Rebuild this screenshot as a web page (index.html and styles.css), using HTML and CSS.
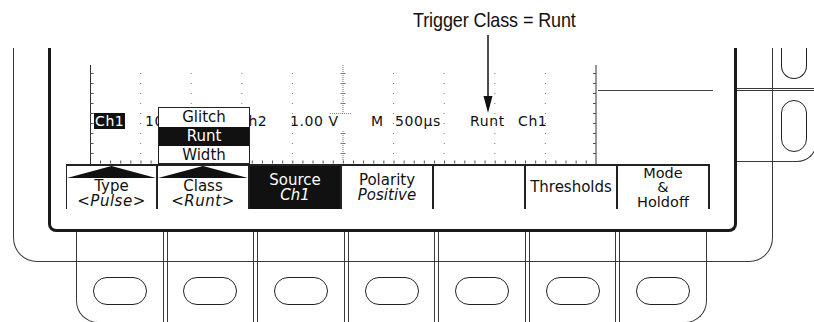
FILE: index.html
```html
<!DOCTYPE html>
<html lang="en">
<head>
    <meta charset="UTF-8">
    <title>Trigger Class = Runt</title>
    <link rel="stylesheet" href="styles.css">
</head>
<body>
<div class="page">
    <div class="caption">Trigger Class = Runt</div>
    <svg class="arrow" width="12" height="80" viewBox="0 0 12 80">
        <line x1="6" y1="1" x2="6" y2="66" stroke="#111" stroke-width="1.5"/>
        <polygon points="1.5,62 10.5,62 6,79" fill="#111"/>
    </svg>

    <div class="bezel">
        <div class="screen">
            <div class="upper">
                <div class="graticule">
                    <svg class="grid" width="507" height="101" viewBox="0 0 507 101">
                        <!-- frame edges -->
                        <line x1="0.5" y1="2" x2="0.5" y2="101" stroke="#333"/>
                        <line x1="506" y1="2" x2="506" y2="101" stroke="#333"/>
                        <line x1="2" y1="10" x2="2" y2="100" stroke="#555" stroke-width="3" stroke-dasharray="1 9"/>
                        <line x1="504.5" y1="10" x2="504.5" y2="100" stroke="#555" stroke-width="3" stroke-dasharray="1 9"/>
                        <line x1="10" y1="99" x2="506" y2="99" stroke="#555" stroke-width="3" stroke-dasharray="1 9.12"/>
                        <!-- major division dots -->
                        <g stroke="#777" stroke-dasharray="1 9">
                            <line x1="50.6" y1="10" x2="50.6" y2="100"/>
                            <line x1="101.2" y1="10" x2="101.2" y2="100"/>
                            <line x1="151.8" y1="10" x2="151.8" y2="100"/>
                            <line x1="202.4" y1="10" x2="202.4" y2="100"/>
                            <line x1="303.6" y1="10" x2="303.6" y2="100"/>
                            <line x1="354.2" y1="10" x2="354.2" y2="100"/>
                            <line x1="404.8" y1="10" x2="404.8" y2="100"/>
                            <line x1="455.4" y1="10" x2="455.4" y2="100"/>
                        </g>
                        <!-- center lines -->
                        <line x1="3" y1="50.5" x2="12" y2="50.5" stroke="#888" stroke-dasharray="1 1"/>
                        <line x1="240" y1="50.5" x2="262" y2="50.5" stroke="#888" stroke-dasharray="1 1"/>
                        <line x1="253" y1="2" x2="253" y2="50" stroke="#777" stroke-dasharray="1 1"/>
                        <line x1="253" y1="68" x2="253" y2="98" stroke="#777" stroke-dasharray="1 1"/>
                        <line x1="253" y1="10" x2="253" y2="50" stroke="#777" stroke-width="5" stroke-dasharray="1 9"/>
                        <line x1="253" y1="70" x2="253" y2="100" stroke="#777" stroke-width="5" stroke-dasharray="1 9"/>
                    </svg>
                    <div class="readouts">
                        <span class="tag">Ch1</span>
                        <span>100mV</span>
                        <span>Ch2</span>
                        <span>1.00 V</span>
                        <span>M</span>
                        <span>500µs</span>
                        <span>Runt</span>
                        <span>Ch1</span>
                    </div>
                </div>
                <div class="side"></div>
            </div>

            <div class="menu">
                <div class="item pointer">
                    <svg class="tri" viewBox="0 0 90 13" preserveAspectRatio="none"><polygon points="0,13 45,0 90,13" fill="#111"/></svg>
                    <span>Type</span>
                    <span class="sub">&lt;<i>Pulse</i>&gt;</span>
                </div>
                <div class="item pointer">
                    <svg class="tri" viewBox="0 0 90 13" preserveAspectRatio="none"><polygon points="0,13 45,0 90,13" fill="#111"/></svg>
                    <span>Class</span>
                    <span class="sub">&lt;<i>Runt</i>&gt;</span>
                </div>
                <div class="item active">
                    <span>Source</span>
                    <i>Ch1</i>
                </div>
                <div class="item">
                    <span>Polarity</span>
                    <i>Positive</i>
                </div>
                <div class="item"></div>
                <div class="item">
                    <span>Thresholds</span>
                </div>
                <div class="item tight">
                    <span>Mode</span>
                    <span>&amp;</span>
                    <span>Holdoff</span>
                </div>

                <div class="popup">
                    <div class="opt">Glitch</div>
                    <div class="opt selected">Runt</div>
                    <div class="opt">Width</div>
                </div>
            </div>
        </div>

        <div class="keys">
            <div class="key"><span class="oval"></span></div>
            <div class="key"><span class="oval"></span></div>
            <div class="key"><span class="oval"></span></div>
            <div class="key"><span class="oval"></span></div>
            <div class="key"><span class="oval"></span></div>
            <div class="key"><span class="oval"></span></div>
            <div class="key"><span class="oval"></span></div>
        </div>
    </div>

    <div class="knobs">
        <div class="knob-row"><span class="knob-cut"></span></div>
        <div class="knob-row second"><span class="knob"></span></div>
    </div>
</div>
</body>
</html>
```

FILE: styles.css
```css
html, body { margin: 0; padding: 0; overflow: hidden; background: #fff; }
body { font-family: "DejaVu Sans", sans-serif; color: #111; }

.page { position: relative; width: 814px; height: 322px; padding: 48px 0 0 13px; box-sizing: border-box; }

/* callout */
.caption { position: absolute; left: 413px; top: 9px; font-family: "Liberation Sans", Arial, sans-serif; font-size: 21px; line-height: 21px; letter-spacing: -0.1px; white-space: nowrap; transform: scaleX(0.855); transform-origin: left top; }
.arrow { position: absolute; left: 482px; top: 34px; }

/* instrument body */
.bezel { width: 760px; height: 214px; box-sizing: border-box; border: 1px solid #3a3a3a; border-top: none; border-radius: 0 0 24px 24px; }

.screen { margin-left: 34px; width: 689px; height: 184px; box-sizing: border-box; border: 3px solid #1a1a1a; border-top: none; border-radius: 0 0 8px 8px; }
.upper { display: flex; align-items: flex-start; }
.graticule { position: relative; margin: 15px 0 0 39px; width: 507px; height: 101px; }
.grid { position: absolute; left: 0; top: 0; }
.side { margin-left: 1px; width: 115px; height: 42px; border-bottom: 1px solid #444; }

.readouts { position: relative; display: grid; grid-template-columns: 51px 93px 52px 81px 24px 75px 48px auto; padding: 50px 0 0 4px; font-size: 14px; line-height: 16px; letter-spacing: 0.6px; white-space: nowrap; }
.readouts span { justify-self: start; }
.readouts .tag { background: #111; color: #fff; padding: 0 1px; }

/* softkey menu */
.menu { position: relative; display: flex; margin-left: 15px; width: 644px; height: 45px; border-top: 2px solid #222; box-sizing: border-box; }
.item { width: 92px; flex: none; box-sizing: border-box; border-right: 2px solid #222; display: flex; flex-direction: column; justify-content: center; align-items: center; font-size: 15px; line-height: 15px; white-space: nowrap; }
.item:first-child { border-left: 1.5px solid #222; }
.item i { font-style: italic; }
.item.pointer { justify-content: flex-start; }
.item .tri { display: block; width: 100%; height: 13px; margin-bottom: 1px; }
.item .sub { letter-spacing: 0.5px; }
.item.active { background: #111; color: #fff; }
.item.tight { font-size: 14.5px; line-height: 14.5px; }

/* class popup covers part of the readout row */
.popup { position: absolute; left: 92px; top: -59px; width: 92px; height: 57px; box-sizing: border-box; border: 1.5px solid #222; background: #fff; z-index: 2; font-size: 15px; text-align: center; }
.opt { height: 19px; line-height: 18px; }
.opt.selected { background: #111; color: #fff; }

/* front panel keys */
.keys { display: flex; gap: 3px; margin-left: 62px; width: 631px; height: 91px; }
.key { flex: 1; box-sizing: border-box; border: 1px solid #3a3a3a; border-top: none; display: flex; justify-content: center; padding-top: 45px; }
.key:first-child { border-bottom-left-radius: 22px; }
.key:last-child { border-bottom-right-radius: 22px; }
.oval { width: 54px; height: 28px; box-sizing: border-box; border: 1.5px solid #222; border-radius: 14px; }

/* side knobs */
.knobs { position: absolute; left: 737px; top: 48px; width: 80px; height: 114px; box-sizing: border-box; border: 1px solid #3a3a3a; border-top: none; border-left: none; border-radius: 0 0 20px 0; }
.knob-row { height: 40px; border-bottom: 3px double #3a3a3a; }
.knob-row.second { height: auto; border-bottom: none; padding-top: 9px; }
.knob-cut { display: block; margin-left: 44px; width: 26px; height: 31px; box-sizing: border-box; border: 1.5px solid #222; border-top: none; border-radius: 0 0 13px 13px; }
.knob { display: block; margin-left: 44px; width: 26px; height: 52px; box-sizing: border-box; border: 1.5px solid #222; border-radius: 13px; }
```
